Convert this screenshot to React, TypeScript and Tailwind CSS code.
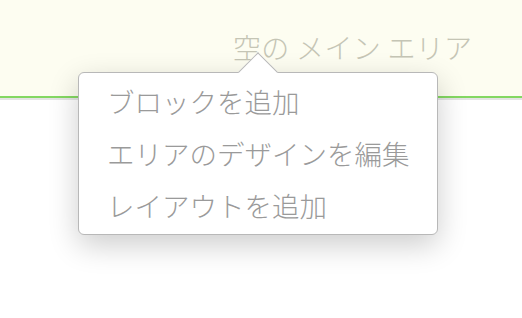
const font = { fontFamily: '"Noto Sans CJK JP", "Noto Sans", sans-serif' }

const MENU_ITEMS = ['ブロックを追加', 'エリアのデザインを編集', 'レイアウトを追加']

export default function App() {
  return (
    <div className="relative h-[318px] w-[522px] overflow-hidden bg-white" style={font}>
      {/* empty area header */}
      <div className="h-[96px] bg-[#fdfdf1] pl-[233px] pt-[21px]">
        <span className="text-[28px] font-light leading-[52px] tracking-[0.3px] text-[#c5c5b5]">空の メイン エリア</span>
      </div>
      <div className="h-[2px] bg-[#84d862]" />
      <div className="h-[2px] bg-[#e4e4e4]" />

      {/* popup menu */}
      <div className="absolute left-[78px] top-[72px] w-[360px] h-[163px] rounded-[6px] border-[1.5px] border-[#b8b8b8] bg-white shadow-[0_10px_30px_rgba(0,0,0,0.2)]">
        <div className="absolute left-[165px] top-[-15px] h-[28px] w-[28px] rotate-45 border-l-[1.5px] border-t-[1.5px] border-[#b8b8b8] bg-white" />
        <ul className="relative pl-[28px] pt-[2px]">
          {MENU_ITEMS.map((item) => (
            <li key={item} className="text-[27.5px] font-light leading-[52px] text-[#9a9a9a]">
              {item}
            </li>
          ))}
        </ul>
      </div>
    </div>
  )
}
